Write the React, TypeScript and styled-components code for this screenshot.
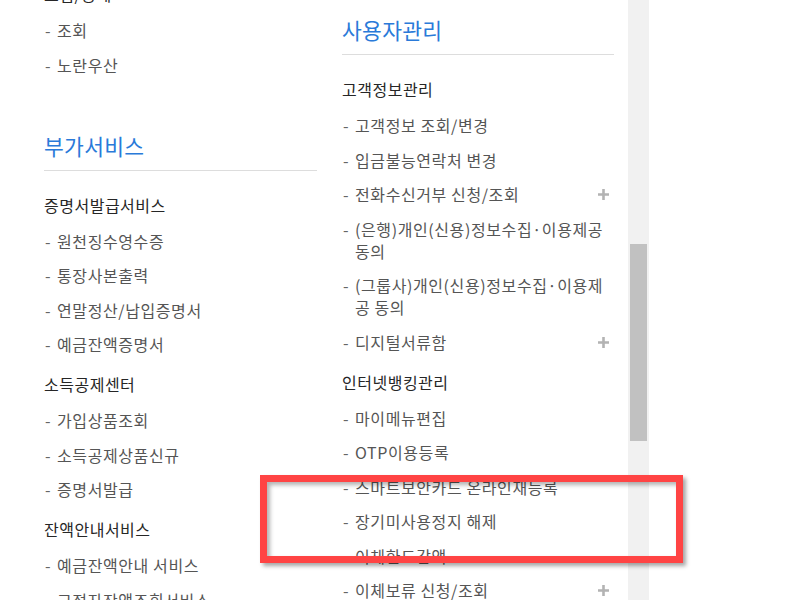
import styled, { createGlobalStyle } from "styled-components";

const GlobalStyle = createGlobalStyle`
  html, body {
    margin: 0;
    padding: 0;
    background: #ffffff;
  }
  body {
    font-family: "Noto Sans CJK KR", "Noto Sans", sans-serif;
  }
`;

const Frame = styled.div`
  position: relative;
  display: flex;
  width: 800px;
  height: 600px;
  overflow: hidden;
  background: #ffffff;
`;

const Panel = styled.div`
  width: 628px;
  height: 600px;
  padding-left: 44px;
  box-sizing: border-box;
  overflow: hidden;
`;

const Columns = styled.div`
  display: grid;
  grid-template-columns: 273px 272px;
  column-gap: 25px;
  align-items: start;
  margin-top: -17px;
`;

const Column = styled.div<{ $top?: number }>`
  display: flex;
  flex-direction: column;
  padding-top: ${(p) => p.$top ?? 0}px;
`;

const Section = styled.section`
  display: flex;
  flex-direction: column;
  & + & {
    margin-top: 56px;
  }
`;

const Title = styled.h2`
  margin: 0 0 23px;
  padding-bottom: 10px;
  border-bottom: 1px solid #dddddd;
  font-size: 21.5px;
  line-height: 28px;
  font-weight: 400;
  letter-spacing: 0.3px;
  color: #2a7ad9;
`;

const Group = styled.div`
  display: flex;
  flex-direction: column;
  & + & {
    margin-top: 18px;
  }
`;

const SubTitle = styled.h3`
  margin: 0 0 14px;
  font-size: 16px;
  line-height: 22px;
  font-weight: 400;
  letter-spacing: 0.5px;
  color: #262626;
`;

const List = styled.ul`
  list-style: none;
  margin: 0;
  padding: 0;
  display: flex;
  flex-direction: column;
  gap: 12.5px;
`;

const Item = styled.li`
  display: flex;
  align-items: flex-start;
  padding-right: 5px;
  font-size: 16px;
  line-height: 22px;
  letter-spacing: 0.6px;
  color: #555555;
`;

const Dash = styled.span`
  flex: 0 0 13px;
  padding-left: 1px;
  box-sizing: border-box;
  color: #666666;
`;

const Label = styled.span`
  flex: 1;
`;

const Plus = styled.svg`
  flex: 0 0 11px;
  width: 11px;
  height: 11px;
  margin-top: 6px;
  margin-left: 6px;
`;

const Track = styled.div`
  width: 21px;
  height: 600px;
  background: #f1f1f1;
  padding: 244px 2px 0;
  box-sizing: border-box;
`;

const Thumb = styled.div`
  height: 197px;
  background: #c1c1c1;
`;

const Highlight = styled.div`
  position: absolute;
  left: 260px;
  top: 475px;
  width: 423px;
  height: 88px;
  box-sizing: border-box;
  border: 7px solid #ff4444;
  box-shadow: 3px 3px 4px rgba(0, 0, 0, 0.35),
    inset 3px 3px 4px rgba(0, 0, 0, 0.3);
`;

type Entry = { label: string; more?: boolean };
type GroupData = { name: string; items: Entry[] };
type SectionData = { title?: string; groups: GroupData[] };

const leftSections: SectionData[] = [
  {
    groups: [{ name: "보험/공제", items: [{ label: "조회" }, { label: "노란우산" }] }],
  },
  {
    title: "부가서비스",
    groups: [
      {
        name: "증명서발급서비스",
        items: [
          { label: "원천징수영수증" },
          { label: "통장사본출력" },
          { label: "연말정산/납입증명서" },
          { label: "예금잔액증명서" },
        ],
      },
      {
        name: "소득공제센터",
        items: [
          { label: "가입상품조회" },
          { label: "소득공제상품신규" },
          { label: "증명서발급" },
        ],
      },
      {
        name: "잔액안내서비스",
        items: [{ label: "예금잔액안내 서비스" }, { label: "고정자잔액조회서비스" }],
      },
    ],
  },
];

const rightSections: SectionData[] = [
  {
    title: "사용자관리",
    groups: [
      {
        name: "고객정보관리",
        items: [
          { label: "고객정보 조회/변경" },
          { label: "입금불능연락처 변경" },
          { label: "전화수신거부 신청/조회", more: true },
          { label: "(은행)개인(신용)정보수집·이용제공 동의" },
          { label: "(그룹사)개인(신용)정보수집·이용제공 동의" },
          { label: "디지털서류함", more: true },
        ],
      },
      {
        name: "인터넷뱅킹관리",
        items: [
          { label: "마이메뉴편집" },
          { label: "OTP이용등록" },
          { label: "스마트보안카드 온라인재등록" },
          { label: "장기미사용정지 해제" },
          { label: "이체한도감액" },
          { label: "이체보류 신청/조회", more: true },
        ],
      },
    ],
  },
];

function PlusIcon() {
  return (
    <Plus viewBox="0 0 11 11">
      <path d="M5.5 0v11M0 5.5h11" stroke="#b3b3b3" strokeWidth="2.6" />
    </Plus>
  );
}

function MenuColumn({ sections, top }: { sections: SectionData[]; top?: number }) {
  return (
    <Column $top={top}>
      {sections.map((s, i) => (
        <Section key={i}>
          {s.title && <Title>{s.title}</Title>}
          {s.groups.map((g) => (
            <Group key={g.name}>
              <SubTitle>{g.name}</SubTitle>
              <List>
                {g.items.map((it) => (
                  <Item key={it.label}>
                    <Dash>-</Dash>
                    <Label>{it.label}</Label>
                    {it.more && <PlusIcon />}
                  </Item>
                ))}
              </List>
            </Group>
          ))}
        </Section>
      ))}
    </Column>
  );
}

export default function App() {
  return (
    <>
      <GlobalStyle />
      <Frame>
        <Panel>
          <Columns>
            <MenuColumn sections={leftSections} />
            <MenuColumn sections={rightSections} top={33} />
          </Columns>
        </Panel>
        <Track>
          <Thumb />
        </Track>
        <Highlight />
      </Frame>
    </>
  );
}
